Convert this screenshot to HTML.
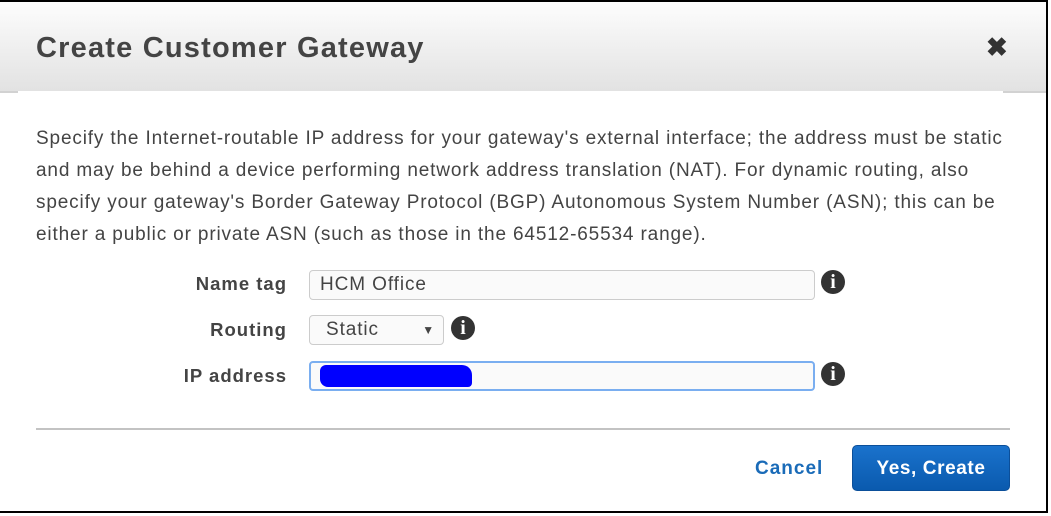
<!DOCTYPE html>
<html><head><style>
body{margin:0;width:1051px;height:516px;background:#fff;position:relative;overflow:hidden;font-family:"Liberation Sans",Arial,sans-serif;}
.frame{position:absolute;left:0;top:0;width:1048px;height:513px;border-top:2px solid #000;border-right:2px solid #000;border-bottom:2px solid #000;box-sizing:border-box;}
.hdr{position:absolute;left:0;top:2px;width:1046px;height:89px;background:linear-gradient(#fdfdfd,#e2e2e2);border-bottom:2px solid #d2d2d2;}
.hdrfix{position:absolute;left:18px;top:91px;width:985px;height:2px;background:#fff;}
h1{position:absolute;left:36px;top:32px;margin:0;font-size:29px;font-weight:bold;color:#444;letter-spacing:1.2px;}
.x{position:absolute;left:986px;top:32px;font-size:26px;font-weight:bold;color:#333;}
p{position:absolute;left:36px;top:123px;width:1000px;margin:0;font-size:19px;letter-spacing:0.85px;line-height:32px;color:#444;}
.lbl{position:absolute;right:764px;font-size:18.5px;font-weight:bold;color:#444;letter-spacing:1px;}
.inp{position:absolute;left:309px;height:30px;border:1px solid #ccc;border-radius:4px;background:#fafafa;box-sizing:border-box;font-size:19px;color:#444;padding-left:10px;line-height:28px;letter-spacing:0.9px;}
.info{position:absolute;width:24px;height:24px;border-radius:50%;background:#333;color:#fff;font-weight:bold;font-family:"Liberation Serif",serif;font-size:20px;text-align:center;line-height:24px;}
.hr{position:absolute;left:36px;top:428px;width:974px;height:2px;background:#c3c3c3;}
.cancel{position:absolute;left:755px;top:458px;font-size:19px;font-weight:bold;color:#1a6bb8;letter-spacing:1px;}
.btn{position:absolute;left:852px;top:445px;width:158px;height:46px;border-radius:5px;background:linear-gradient(#1a72cc,#0a5aae);border:1px solid #0b4f9a;box-sizing:border-box;color:#fff;font-size:19px;font-weight:bold;text-align:center;line-height:46px;letter-spacing:0.6px;}
</style></head><body>
<div class="hdr"></div><div class="hdrfix"></div>
<div class="frame"></div>
<h1>Create Customer Gateway</h1>
<div class="x">✖</div>
<p>Specify the Internet-routable IP address for your gateway's external interface; the address must be static and may be behind a device performing network address translation (NAT). For dynamic routing, also specify your gateway's Border Gateway Protocol (BGP) Autonomous System Number (ASN); this can be either a public or private ASN (such as those in the 64512-65534 range).</p>
<div class="lbl" style="top:273px">Name tag</div>
<div class="inp" style="top:270px;width:506px">HCM Office</div>
<div class="info" style="left:821px;top:270px">i</div>
<div class="lbl" style="top:319px">Routing</div>
<div class="inp" style="top:315px;width:135px;padding-left:16px">Static<span style="position:absolute;right:8px;font-size:12px">▼</span></div>
<div class="info" style="left:451px;top:316px">i</div>
<div class="lbl" style="top:365px">IP address</div>
<div class="inp" style="top:361px;width:506px;border:2px solid #7aaef0">4</div>
<div style="position:absolute;left:320px;top:365px;width:152px;height:22px;background:#0000ff;border-radius:6px 10px 4px 8px"></div>
<div class="info" style="left:821px;top:362px">i</div>
<div class="hr"></div>
<div class="cancel">Cancel</div>
<div class="btn">Yes, Create</div>
</body></html>
